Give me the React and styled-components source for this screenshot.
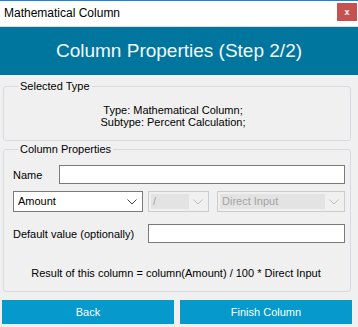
import React from 'react'
import styled, { createGlobalStyle } from 'styled-components'

const Global = createGlobalStyle`
  html, body {
    margin: 0;
    padding: 0;
    background: #f0f0f0;
  }
  body {
    font-family: "Liberation Sans", Arial, sans-serif;
    font-size: 11px;
    color: #000;
  }
  * { box-sizing: border-box; }
`

const Window = styled.div`
  width: 358px;
  height: 327px;
  display: flex;
  flex-direction: column;
  border-top: 1px solid #1a84d8;
  background: #f0f0f0;
  overflow: hidden;
`

const TitleBar = styled.div`
  height: 26px;
  background: #fff;
  border-bottom: 1px solid #dedede;
  display: flex;
  align-items: flex-start;
  justify-content: space-between;
  padding: 0 1px 0 4px;
`

const Title = styled.span`
  font-size: 12px;
  line-height: 12px;
  margin-top: 6px;
  color: #000;
`

const CloseButton = styled.div`
  width: 20px;
  height: 18px;
  margin-top: 2px;
  background: #c75050;
  color: #fff;
  font-size: 9px;
  font-weight: bold;
  display: flex;
  align-items: center;
  justify-content: center;
`

const Header = styled.div`
  height: 48px;
  background: #00769e;
  color: #f4f8fa;
  font-size: 19px;
  display: flex;
  align-items: center;
  justify-content: center;
  padding-bottom: 1px;
`

const Body = styled.div`
  flex: 1;
  display: flex;
  flex-direction: column;
  padding: 5px 7px 0 3px;
`

const GroupBox = styled.fieldset`
  margin: 0 0 ${p => p.$after || 0}px 0;
  border: 1px solid #d5dbe1;
  border-radius: 3px;
  padding: ${p => p.$pad};
  min-width: 0;
`

const Legend = styled.legend`
  padding: 0 2px;
  margin-left: 5px;
  line-height: 13px;
  color: #000;
`

const TypeInfo = styled.div`
  text-align: center;
  line-height: 12px;
  padding-right: 8px;
`

const Row = styled.div`
  display: flex;
  align-items: center;
  margin-top: ${p => p.$top || 0}px;
  margin-left: ${p => p.$left || 0}px;
`

const Label = styled.span`
  width: ${p => p.$w}px;
  flex-shrink: 0;
`

const TextBox = styled.div`
  height: 19px;
  flex: 1;
  background: #fff;
  border: 1px solid #7a7a7a;
`

const Combo = styled.div`
  width: ${p => p.$w}px;
  height: 21px;
  flex-shrink: 0;
  display: flex;
  align-items: center;
  margin-left: ${p => p.$left || 0}px;
  border: 1px solid ${p => (p.$disabled ? '#cccccc' : '#7a7a7a')};
  background: ${p => (p.$disabled ? '#f0f0f0' : '#fff')};
  padding: 2px;
  color: ${p => (p.$disabled ? '#a3a3a3' : '#000')};
`

const ComboText = styled.div`
  flex: 1;
  height: 15px;
  line-height: 15px;
  padding-left: 2px;
  background: ${p => (p.$disabled ? '#e3e3e3' : 'transparent')};
`

const Arrow = styled.div`
  width: 17px;
  display: flex;
  justify-content: center;
  flex-shrink: 0;
`

const Result = styled.div`
  text-align: center;
  margin-top: 24px;
  line-height: 13px;
  padding-right: 6px;
`

const Buttons = styled.div`
  display: flex;
  gap: 6px;
  margin: 8px -1px 0 -1px;
`

const Button = styled.div`
  flex: 1;
  height: 24px;
  background: #0599cc;
  color: #fff;
  display: flex;
  align-items: center;
  justify-content: center;
`

const Chevron = ({ color }) => (
  <svg width="10" height="6" viewBox="0 0 10 6">
    <polyline points="0.5,0.5 5,5 9.5,0.5" fill="none" stroke={color} strokeWidth="1" />
  </svg>
)

const ComboBox = ({ w, left, text, disabled }) => (
  <Combo $w={w} $left={left} $disabled={disabled}>
    <ComboText $disabled={disabled}>{text}</ComboText>
    <Arrow>
      <Chevron color={disabled ? '#bfbfbf' : '#444'} />
    </Arrow>
  </Combo>
)

export default function App() {
  return (
    <Window>
      <Global />
      <TitleBar>
        <Title>Mathematical Column</Title>
        <CloseButton>x</CloseButton>
      </TitleBar>
      <Header>Column Properties (Step 2/2)</Header>
      <Body>
        <GroupBox $pad="11px 9px 12px 9px" $after={2}>
          <Legend>Selected Type</Legend>
          <TypeInfo>
            Type: Mathematical Column;
            <br />
            Subtype: Percent Calculation;
          </TypeInfo>
        </GroupBox>
        <GroupBox $pad="9px 5px 11px 9px">
          <Legend>Column Properties</Legend>
          <Row>
            <Label $w={46}>Name</Label>
            <TextBox />
          </Row>
          <Row $top={7}>
            <ComboBox w={130} text="Amount" />
            <ComboBox w={61} left={5} text="/" disabled />
            <ComboBox w={128} left={8} text="Direct Input" disabled />
          </Row>
          <Row $top={12}>
            <Label $w={135}>Default value (optionally)</Label>
            <TextBox />
          </Row>
          <Result>Result of this column = column(Amount) / 100 * Direct Input</Result>
        </GroupBox>
        <Buttons>
          <Button>Back</Button>
          <Button>Finish Column</Button>
        </Buttons>
      </Body>
    </Window>
  )
}
